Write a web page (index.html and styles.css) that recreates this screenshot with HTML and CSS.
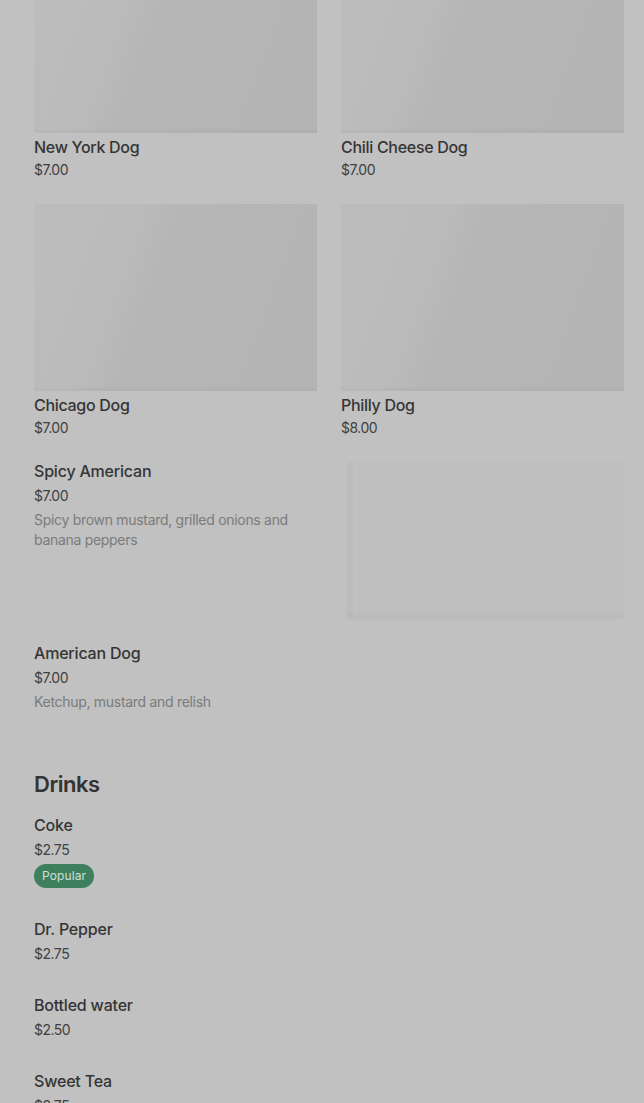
FILE: index.html
```html
<!DOCTYPE html>
<html lang="en">
<head>
<meta charset="utf-8">
<title>Menu</title>
<link rel="stylesheet" href="styles.css">
</head>
<body>
<main class="menu">
  <section class="grid grid-first">
    <div class="card">
      <div class="thumb"></div>
      <div class="card-title">New York Dog</div>
      <div class="card-price">$7.00</div>
    </div>
    <div class="card">
      <div class="thumb"></div>
      <div class="card-title">Chili Cheese Dog</div>
      <div class="card-price">$7.00</div>
    </div>
    <div class="card">
      <div class="thumb"></div>
      <div class="card-title">Chicago Dog</div>
      <div class="card-price">$7.00</div>
    </div>
    <div class="card">
      <div class="thumb"></div>
      <div class="card-title">Philly Dog</div>
      <div class="card-price">$8.00</div>
    </div>
  </section>

  <section class="list">
    <div class="row">
      <div class="row-text">
        <div class="item-title">Spicy American</div>
        <div class="item-price">$7.00</div>
        <div class="item-desc">Spicy brown mustard, grilled onions and banana peppers</div>
      </div>
      <div class="row-img"></div>
    </div>
    <div class="row">
      <div class="row-text">
        <div class="item-title">American Dog</div>
        <div class="item-price">$7.00</div>
        <div class="item-desc">Ketchup, mustard and relish</div>
      </div>
    </div>
  </section>

  <section class="drinks">
    <h2 class="section-title">Drinks</h2>
    <div class="drink">
      <div class="item-title">Coke</div>
      <div class="item-price">$2.75</div>
      <span class="badge">Popular</span>
    </div>
    <div class="drink">
      <div class="item-title">Dr. Pepper</div>
      <div class="item-price">$2.75</div>
    </div>
    <div class="drink">
      <div class="item-title">Bottled water</div>
      <div class="item-price">$2.50</div>
    </div>
    <div class="drink">
      <div class="item-title">Sweet Tea</div>
      <div class="item-price">$2.75</div>
    </div>
  </section>
</main>
</body>
</html>
```

FILE: styles.css
```css
html, body {
  margin: 0;
  padding: 0;
  background: #c1c1c1;
  overflow: hidden;
}
body {
  font-family: Inter, "Noto Sans", "Liberation Sans", sans-serif;
  color: #353535;
  height: 1103px;
}
.menu {
  padding: 0 20px 0 34px;
}
.grid {
  display: grid;
  grid-template-columns: 1fr 1fr;
  column-gap: 24px;
  row-gap: 24px;
}
.grid-first {
  margin-top: -54px;
}
.thumb {
  height: 187px;
  background:
    linear-gradient(to bottom, rgba(0,0,0,0) 0, rgba(0,0,0,0) 183px, rgba(0,0,0,0.025) 184px, rgba(0,0,0,0.025) 187px),
    linear-gradient(110deg, #bcbcbc 0%, #bbbbbb 30%, #b6b6b6 42%, #b4b4b4 100%);
}
.card-title {
  margin-top: 4px;
  font-size: 16px;
  line-height: 20px;
  font-weight: 500;
  color: #353535;
  letter-spacing: -0.3px;
}
.card-price {
  margin-top: 3px;
  font-size: 14px;
  line-height: 20px;
  color: #404040;
  letter-spacing: -0.5px;
}
.list {
  margin-top: 23px;
  display: flex;
  flex-direction: column;
  gap: 25px;
}
.row {
  display: flex;
  align-items: flex-start;
  gap: 31px;
}
.row-text {
  flex: 1;
  min-width: 0;
}
.row-img {
  width: 276px;
  height: 156px;
  margin-top: 1px;
  background: #bfbfbf;
  box-shadow: inset 5px 0 0 rgba(0,0,0,0.015), inset 0 -5px 0 rgba(0,0,0,0.02), -2px 2px 3px rgba(0,0,0,0.02);
}
.item-title {
  font-size: 16px;
  line-height: 20px;
  font-weight: 500;
  color: #353535;
  letter-spacing: -0.2px;
}
.item-price {
  margin-top: 5px;
  font-size: 14px;
  line-height: 20px;
  color: #404040;
  letter-spacing: -0.5px;
}
.item-desc {
  margin-top: 4px;
  font-size: 14px;
  line-height: 20px;
  color: #7b7b7b;
  letter-spacing: -0.3px;
  padding-right: 6px;
}
.drinks {
  margin-top: 56px;
}
.section-title {
  margin: 0 0 15px;
  font-size: 22px;
  line-height: 32px;
  font-weight: 600;
  color: #333;
  letter-spacing: -0.5px;
}
.drink {
  display: flex;
  flex-direction: column;
  align-items: flex-start;
  padding-bottom: 31px;
}
.badge {
  margin-top: 4px;
  display: inline-block;
  height: 24px;
  line-height: 24px;
  padding: 0 8px;
  border-radius: 12px;
  background: #3e7f5e;
  color: #cfe0d7;
  font-size: 12px;
  letter-spacing: 0.1px;
}
```
